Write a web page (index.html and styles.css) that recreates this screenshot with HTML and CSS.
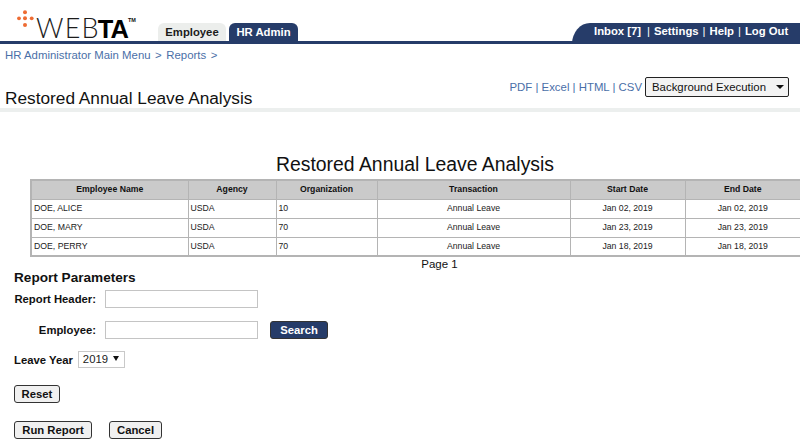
FILE: index.html
```html
<!DOCTYPE html>
<html lang="en">
<head>
<meta charset="utf-8">
<title>Restored Annual Leave Analysis</title>
<link rel="stylesheet" href="styles.css">
</head>
<body>
<header class="topbar">
  <div class="brand">
    <svg class="dots" width="18" height="20" viewBox="0 0 18 20" aria-hidden="true">
      <g fill="#ee6c33">
        <circle cx="8" cy="2.3" r="2"/>
        <circle cx="2" cy="8.3" r="1.9"/><circle cx="8" cy="8.3" r="2"/><circle cx="14.7" cy="8.3" r="1.9"/>
        <circle cx="8" cy="15" r="2"/>
      </g>
    </svg>
    <span class="wordmark">WEB<b>TA</b></span><span class="tm">TM</span>
  </div>
  <nav class="tabs">
    <a class="tab">Employee</a>
    <a class="tab tab-active">HR Admin</a>
  </nav>
  <nav class="utility">
    <a>Inbox [7]</a><i>|</i><a>Settings</a><i>|</i><a>Help</a><i>|</i><a>Log Out</a>
  </nav>
</header>
<div class="crumbs"><a>HR Administrator Main Menu</a><span class="sep">&gt;</span><a>Reports</a><span class="sep">&gt;</span></div>
<section class="pagehead">
  <h1>Restored Annual Leave Analysis</h1>
  <div class="exports">
    <span class="links">PDF | Excel | HTML | CSV</span>
    <div class="bg-select">Background Execution<span class="caret"></span></div>
  </div>
</section>
<main>
  <h2 class="report-title">Restored Annual Leave Analysis</h2>
  <table class="report">
    <colgroup>
      <col class="c1"><col class="c2"><col class="c3"><col class="c4"><col class="c5"><col class="c6">
    </colgroup>
    <thead>
      <tr><th>Employee Name</th><th>Agency</th><th>Organization</th><th>Transaction</th><th>Start Date</th><th>End Date</th></tr>
    </thead>
    <tbody>
      <tr><td>DOE, ALICE</td><td>USDA</td><td>10</td><td class="mid">Annual Leave</td><td class="mid">Jan 02, 2019</td><td class="mid">Jan 02, 2019</td></tr>
      <tr><td>DOE, MARY</td><td>USDA</td><td>70</td><td class="mid">Annual Leave</td><td class="mid">Jan 23, 2019</td><td class="mid">Jan 23, 2019</td></tr>
      <tr><td>DOE, PERRY</td><td>USDA</td><td>70</td><td class="mid">Annual Leave</td><td class="mid">Jan 18, 2019</td><td class="mid">Jan 18, 2019</td></tr>
    </tbody>
  </table>
  <div class="pageno">Page 1</div>
  <form class="params">
    <h3>Report Parameters</h3>
    <div class="row row-header">
      <label class="lab">Report Header:</label>
      <span class="field"></span>
    </div>
    <div class="row row-emp">
      <label class="lab">Employee:</label>
      <span class="field"></span>
      <button type="button" class="btn btn-navy">Search</button>
    </div>
    <div class="row row-year">
      <label>Leave Year</label>
      <span class="year">2019<span class="year-caret"></span></span>
    </div>
    <div class="row row-reset"><button type="button" class="btn btn-reset">Reset</button></div>
    <div class="row row-run">
      <button type="button" class="btn btn-run">Run Report</button>
      <button type="button" class="btn btn-cancel">Cancel</button>
    </div>
  </form>
</main>
</body>
</html>
```
FILE: styles.css
```css
* { box-sizing: border-box; }
html, body { margin: 0; padding: 0; }
body {
  width: 800px;
  height: 446px;
  overflow: hidden;
  background: #fff;
  color: #111;
  font-family: "Liberation Sans", Arial, sans-serif;
  font-size: 11.3px;
}
.topbar {
  display: flex;
  align-items: flex-end;
  height: 44px;
  border-bottom: 3px solid #263c69;
}
.brand {
  width: 158px;
  height: 41px;
  padding: 10px 0 0 17px;
  display: flex;
  align-items: flex-start;
  flex: none;
}
.dots { flex: none; margin-right: 1px; }
.wordmark {
  font-family: "Lato", "Liberation Sans", sans-serif;
  font-weight: 300;
  font-size: 27px;
  line-height: 28px;
  color: #1c1c1c;
  letter-spacing: 1.2px;
  white-space: nowrap;
  margin-top: 4px;
}
.wordmark b {
  font-family: "Liberation Sans", sans-serif;
  font-weight: 700;
  color: #000;
  font-size: 25.5px;
  letter-spacing: -1px;
  margin-left: -2px;
}
.tm { font-size: 5.5px; font-weight: 700; margin-top: 7px; margin-left: 0; line-height: 6px; }
.tabs { display: flex; gap: 3px; flex: none; }
.tab {
  height: 18px;
  border-radius: 6px 6px 0 0;
  background: #eceeec;
  color: #1b1b1b;
  font-weight: 700;
  font-size: 11.3px;
  line-height: 18px;
  text-align: center;
  width: 68px;
}
.tab-active { background: #263c69; color: #fff; width: 69px; }
.utility {
  margin-left: auto;
  width: 228px;
  height: 21px;
  margin-bottom: -3px;
  background: #263c69;
  border-radius: 18px 0 0 0 / 21px 0 0 0;
  color: #fff;
  font-weight: 700;
  font-size: 11.3px;
  line-height: 17px;
  padding-left: 22px;
  display: flex;
  gap: 3px;
  white-space: nowrap;
}
.utility a:first-child { margin-right: 2px; }
.utility i { font-style: normal; font-weight: 400; padding: 0 1px; }
.crumbs {
  height: 22px;
  padding: 3px 0 0 5px;
  color: #4a6fa8;
  font-size: 11.4px;
  line-height: 16px;
}
.sep { margin: 0 4.5px; }
.pagehead {
  display: flex;
  justify-content: space-between;
  height: 46px;
  border-bottom: 4px solid #ecefee;
  padding: 11px 11px 0 5px;
}
.pagehead h1 {
  margin: 11px 0 0;
  font-size: 17.25px;
  font-weight: 400;
  line-height: 21px;
  color: #111;
}
.exports {
  display: flex;
  align-items: center;
  height: 20px;
  gap: 3px;
  color: #4a6fa8;
  font-size: 11.4px;
}
.bg-select {
  width: 144px;
  height: 20px;
  border: 1px solid #222;
  border-radius: 2px;
  background: #f3f3f3;
  color: #111;
  padding: 0 0 0 6px;
  line-height: 18px;
  position: relative;
}
.caret {
  position: absolute;
  right: 4px;
  top: 7px;
  border-style: solid;
  border-width: 4px 4px 0;
  border-color: #111 transparent transparent;
}
.report-title {
  margin: 41px 0 0 30px;
  width: 770px;
  text-align: center;
  font-size: 19.4px;
  font-weight: 400;
  line-height: 23px;
  color: #111;
}
.report {
  margin: 3px 0 0 30px;
  width: 770px;
  border-collapse: collapse;
  table-layout: fixed;
  font-size: 8.7px;
  border: 2px solid #b4b4b4;
}
.c1 { width: 157px; } .c2 { width: 88px; } .c3 { width: 101px; }
.c4 { width: 193px; } .c5 { width: 115px; } .c6 { width: 116px; }
.report th, .report td { border: 1px solid #b4b4b4; height: 19px; padding: 0 2px; line-height: 11px; }
.report th { background: #cacaca; font-weight: 700; text-align: center; color: #111; }
.report td { color: #222; }
.report td.mid { text-align: center; }
.pageno {
  margin-left: 79px;
  width: 721px;
  text-align: center;
  line-height: 14px;
  height: 14px;
  font-size: 11.5px;
}
.params { padding-left: 14px; }
.params h3 { margin: 0; font-size: 13.6px; line-height: 14px; color: #111; font-weight: 700; }
.row { display: flex; align-items: center; }
.lab { width: 82px; text-align: right; margin-right: 9px; font-weight: 700; white-space: nowrap; }
.params label { font-weight: 700; }
.row-header { height: 18px; margin-top: 5px; }
.row-emp { height: 18px; margin-top: 13px; }
.field {
  width: 153px;
  height: 18px;
  border: 1px solid #c4c4c4;
  background: #fff;
}
.btn {
  font-family: "Liberation Sans", Arial, sans-serif;
  font-size: 11.3px;
  font-weight: 700;
  height: 18px;
  padding: 0;
  border: 1px solid #333;
  border-radius: 3px;
  background: #f0f0f0;
  color: #111;
  line-height: 16px;
}
.btn-navy { background: #263c69; color: #fff; margin-left: 12px; width: 58px; }
.btn-reset { width: 46px; }
.btn-run { width: 78px; }
.btn-cancel { width: 53px; }
.row-year { height: 17px; margin-top: 12px; }
.year {
  margin-left: 5px;
  width: 47px;
  height: 17px;
  border: 1px solid #c9c9c9;
  padding-left: 4px;
  line-height: 15px;
  color: #222;
}
.year-caret {
  display: inline-block;
  margin-left: 5px;
  vertical-align: 2px;
  border-style: solid;
  border-width: 5px 3px 0;
  border-color: #111 transparent transparent;
}
.row-reset { margin-top: 17px; height: 18px; }
.row-run { margin-top: 18px; height: 18px; gap: 17px; }
```
